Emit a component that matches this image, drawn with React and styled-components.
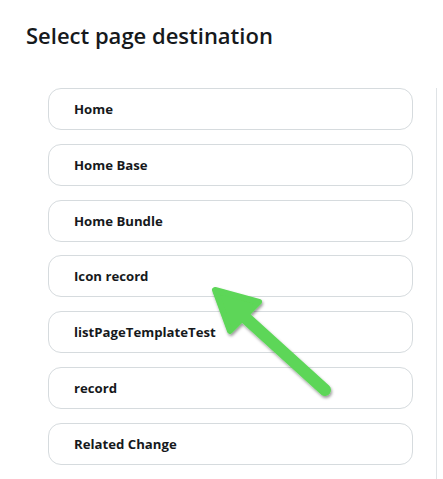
import React from "react";
import styled, { createGlobalStyle } from "styled-components";

const Global = createGlobalStyle`
  html, body { margin: 0; padding: 0; background: #ffffff; }
  body { font-family: "Open Sans", "Liberation Sans", sans-serif; overflow: hidden; }
`;

const Page = styled.div`
  position: relative;
  width: 443px;
  height: 479px;
  overflow: hidden;
  background: #fff;
`;

const Title = styled.h1`
  margin: 0;
  padding: 20px 0 0 26px;
  height: 88px;
  box-sizing: border-box;
  font-size: 22px;
  font-weight: 600;
  color: #16191c;
  letter-spacing: 0;
  line-height: 30px;
`;

const ListPanel = styled.div`
  margin-left: 24px;
  width: 413px;
  box-sizing: border-box;
  height: 391px;
  padding: 0 23px 0 24px;
  border-right: 1px solid #dfe3e6;
  display: flex;
  flex-direction: column;
  gap: 13.8px;
  overflow: hidden;
`;

const Item = styled.div`
  flex: 0 0 auto;
  height: 42px;
  box-sizing: border-box;
  border: 1px solid #d6dbde;
  border-radius: 13px;
  display: flex;
  align-items: center;
  padding-left: 25px;
  font-size: 13.2px;
  font-weight: 700;
  color: #16191c;
`;

const Arrow = styled.svg`
  position: absolute;
  left: 0;
  top: 0;
  pointer-events: none;
`;

const items = [
  "Home",
  "Home Base",
  "Home Bundle",
  "Icon record",
  "listPageTemplateTest",
  "record",
  "Related Change",
];

export default function App() {
  return (
    <Page>
      <Global />
      <Title>Select page destination</Title>
      <ListPanel>
        {items.map((t) => (
          <Item key={t}>{t}</Item>
        ))}
      </ListPanel>
      <Arrow width="443" height="479" viewBox="0 0 443 479">
        <defs>
          <filter id="sh" x="-20%" y="-20%" width="140%" height="140%">
            <feDropShadow dx="1" dy="2" stdDeviation="1.5" floodColor="#000" floodOpacity="0.4" />
          </filter>
        </defs>
        <g filter="url(#sh)" fill="#5dd658" stroke="#5dd658" strokeLinecap="round" strokeLinejoin="round">
          <line x1="325" y1="390" x2="228" y2="302" strokeWidth="12" />
          <polygon points="215,290 259,302 230,331" strokeWidth="6" />
        </g>
      </Arrow>
    </Page>
  );
}
